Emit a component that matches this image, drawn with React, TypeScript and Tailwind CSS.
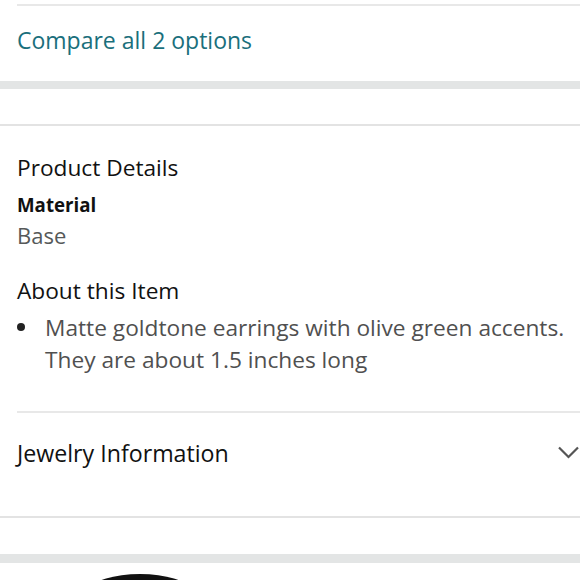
import React from "react";

export default function App() {
  const font = { fontFamily: "'Open Sans', 'Noto Sans', sans-serif" };
  return (
    <div className="w-[580px] h-[580px] overflow-hidden bg-white" style={font}>
      <div className="h-[4px]" />
      <div className="ml-[17px] border-t-2 border-[#e8e8e8] h-[77px] pt-[20px]">
        <div className="text-[23px] leading-[28px] text-[#1a6f7c]">Compare all 2 options</div>
      </div>
      <div className="h-[8px] bg-[#e3e5e5]" />
      <div className="h-[35px]" />
      <div className="border-t-2 border-[#e3e3e3] pl-[17px]">
        <div className="pt-[28px] text-[22.7px] leading-[28px] text-[#111]">Product Details</div>
        <div className="mt-[11px] text-[18.7px] font-bold leading-[24px] text-[#111]">Material</div>
        <div className="mt-[4px] text-[22px] leading-[28px] text-[#565959]">Base</div>
        <div className="mt-[28px] text-[22.7px] leading-[28px] text-[#111]">About this Item</div>
        <div className="mt-[7px] flex">
          <span className="w-[28px] flex pt-[11px]">
            <span className="w-[8px] h-[8px] rounded-full bg-[#222]" />
          </span>
          <span className="text-[22.7px] leading-[32px] text-[#505050] whitespace-nowrap">
            Matte goldtone earrings with olive green accents.
            <br />
            They are about 1.5 inches long
          </span>
        </div>
      </div>
      <div className="mt-[35px] ml-[17px] border-t-2 border-[#e8e8e8] h-[105px] pt-[26px]">
        <div className="flex items-center justify-between h-[28px] pr-[1px]">
          <span className="text-[23.2px] leading-[28px] text-[#111]">Jewelry Information</span>
          <svg width="21" height="14" viewBox="0 0 21 14" fill="none" stroke="#555" strokeWidth="2.2">
            <path d="M1 1.5l9.5 9.5 9.5-9.5" />
          </svg>
        </div>
      </div>
      <div className="border-t-2 border-[#e3e3e3] h-[38px]" />
      <div className="h-[9px] bg-[#e3e5e5]" />
      <div className="relative h-[20px]">
        <div className="absolute left-[92px] top-[11px] w-[96px] h-[30px] rounded-[50%] bg-[#111]" />
      </div>
    </div>
  );
}
